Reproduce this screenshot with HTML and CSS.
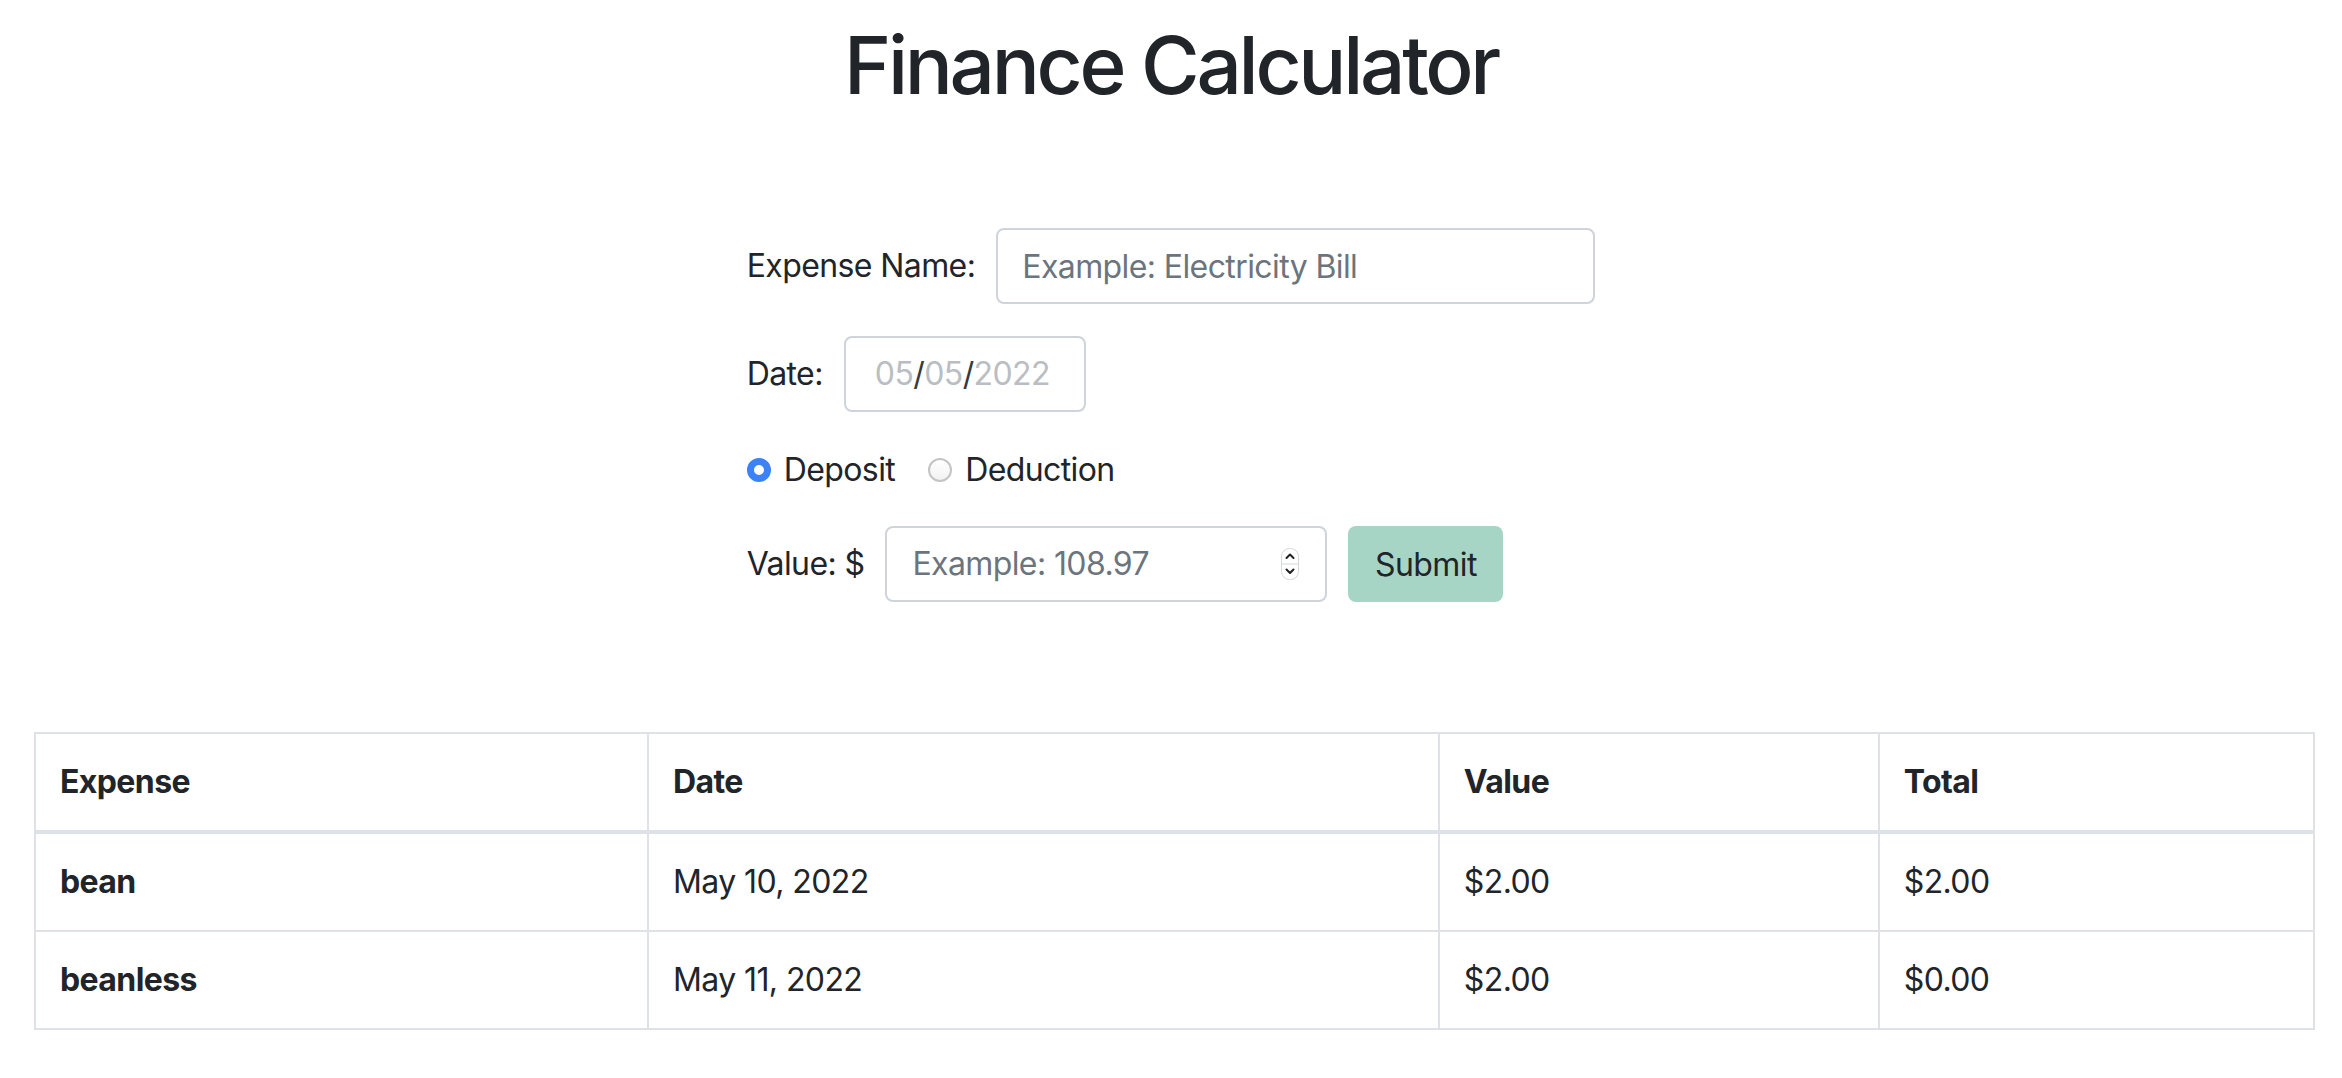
FILE: index.html
```html
<!DOCTYPE html>
<html lang="en">
<head>
<meta charset="utf-8">
<title>Finance Calculator</title>
<link rel="stylesheet" href="styles.css">
</head>
<body>
<h1 class="title">Finance Calculator</h1>
<form class="calc-form">
  <div class="form-row">
    <label class="form-label">Expense Name:</label>
    <input class="field name-field" type="text" placeholder="Example: Electricity Bill">
  </div>
  <div class="form-row">
    <label class="form-label">Date:</label>
    <div class="field date-field"><span class="date-part">05</span><span class="date-sep">/</span><span class="date-part">05</span><span class="date-sep">/</span><span class="date-part">2022</span></div>
  </div>
  <div class="form-row radio-row">
    <span class="radio radio-checked"></span><span class="radio-label">Deposit</span>
    <span class="radio"></span><span class="radio-label">Deduction</span>
  </div>
  <div class="form-row">
    <label class="form-label">Value: $</label>
    <div class="field value-field">
      <span class="placeholder">Example: 108.97</span>
      <span class="spinner">
        <svg width="18" height="32" viewBox="0 0 18 32">
          <rect x="0.5" y="0.5" width="17" height="31" rx="8" fill="#fff" stroke="#d5d7da"/>
          <line x1="1" y1="16" x2="17" y2="16" stroke="#d5d7da"/>
          <path d="M5.5 10 L9 6.5 L12.5 10" fill="none" stroke="#222" stroke-width="2" stroke-linecap="round" stroke-linejoin="round"/>
          <path d="M5.5 21.5 L9 25 L12.5 21.5" fill="none" stroke="#222" stroke-width="2" stroke-linecap="round" stroke-linejoin="round"/>
        </svg>
      </span>
    </div>
    <button class="submit-btn" type="button">Submit</button>
  </div>
</form>
<div class="table-wrap">
  <table class="expense-table">
    <colgroup>
      <col class="col-expense"><col class="col-date"><col class="col-value"><col class="col-total">
    </colgroup>
    <thead>
      <tr><th>Expense</th><th>Date</th><th>Value</th><th>Total</th></tr>
    </thead>
    <tbody>
      <tr><th>bean</th><td>May 10, 2022</td><td>$2.00</td><td>$2.00</td></tr>
      <tr><th>beanless</th><td>May 11, 2022</td><td>$2.00</td><td>$0.00</td></tr>
    </tbody>
  </table>
</div>
</body>
</html>
```
FILE: styles.css
```css
* { box-sizing: border-box; }
body {
  margin: 0;
  font-family: Inter, "Noto Sans", "Liberation Sans", sans-serif;
  font-size: 32px;
  line-height: 48px;
  letter-spacing: -0.6px;
  color: #212529;
  background: #fff;
}
.title {
  margin: 17px 0 0;
  font-size: 80px;
  line-height: 96px;
  font-weight: 500;
  letter-spacing: -3.3px;
  text-align: center;
}
.calc-form {
  width: fit-content;
  margin: 115px auto 0;
  display: flex;
  flex-direction: column;
  align-items: flex-start;
  gap: 32px;
}
.form-row {
  display: flex;
  align-items: center;
  gap: 21px;
}
.form-label { font-size: 32px; }
.field {
  height: 76px;
  border: 2px solid #ced4da;
  border-radius: 8px;
  background: #fff;
  font-family: inherit;
  font-size: 32px;
  letter-spacing: -0.6px;
  color: #495057;
}
.name-field {
  width: 599px;
  padding: 0 24px;
  outline: none;
}
.name-field::placeholder { color: #6c757d; }
.date-field {
  width: 242px;
  display: flex;
  align-items: center;
  padding-left: 29px;
}
.date-part { color: #babec3; }
.date-sep { color: #343a40; }
.radio-row { gap: 0; height: 48px; margin-top: 2px; }
.radio {
  width: 24px;
  height: 24px;
  border-radius: 50%;
  border: 2px solid #c4c4c4;
  background: linear-gradient(#fff, #f2f2f2);
}
.radio-checked {
  border: 7px solid #3b82f6;
  background: #fff;
}
.radio-label { margin-left: 13px; margin-right: 33px; }
.value-field {
  width: 442px;
  display: flex;
  align-items: center;
  justify-content: space-between;
  padding: 0 26px 0 25px;
}
.placeholder { color: #6c757d; }
.spinner { display: flex; }
.submit-btn {
  height: 76px;
  width: 155px;
  border: none;
  border-radius: 8px;
  background: #a6d5c6;
  color: #212529;
  font-family: inherit;
  font-size: 32px;
  letter-spacing: -0.6px;
  padding: 0 20px;
}
.table-wrap {
  margin: 130px 27px 0 34px;
}
.expense-table {
  width: 100%;
  border-collapse: collapse;
  table-layout: fixed;
  border: 2px solid #dee2e6;
}
.col-expense { width: 26.9%; }
.col-date { width: 34.7%; }
.col-value { width: 19.3%; }
.col-total { width: 19.1%; }
.expense-table th,
.expense-table td {
  border: 2px solid #dee2e6;
  padding: 24px;
  text-align: left;
  vertical-align: top;
  line-height: 48px;
}
.expense-table th { font-weight: 700; }
.expense-table td { font-weight: 400; }
.expense-table thead th { border-bottom: 4px solid #dee2e6; }
```
